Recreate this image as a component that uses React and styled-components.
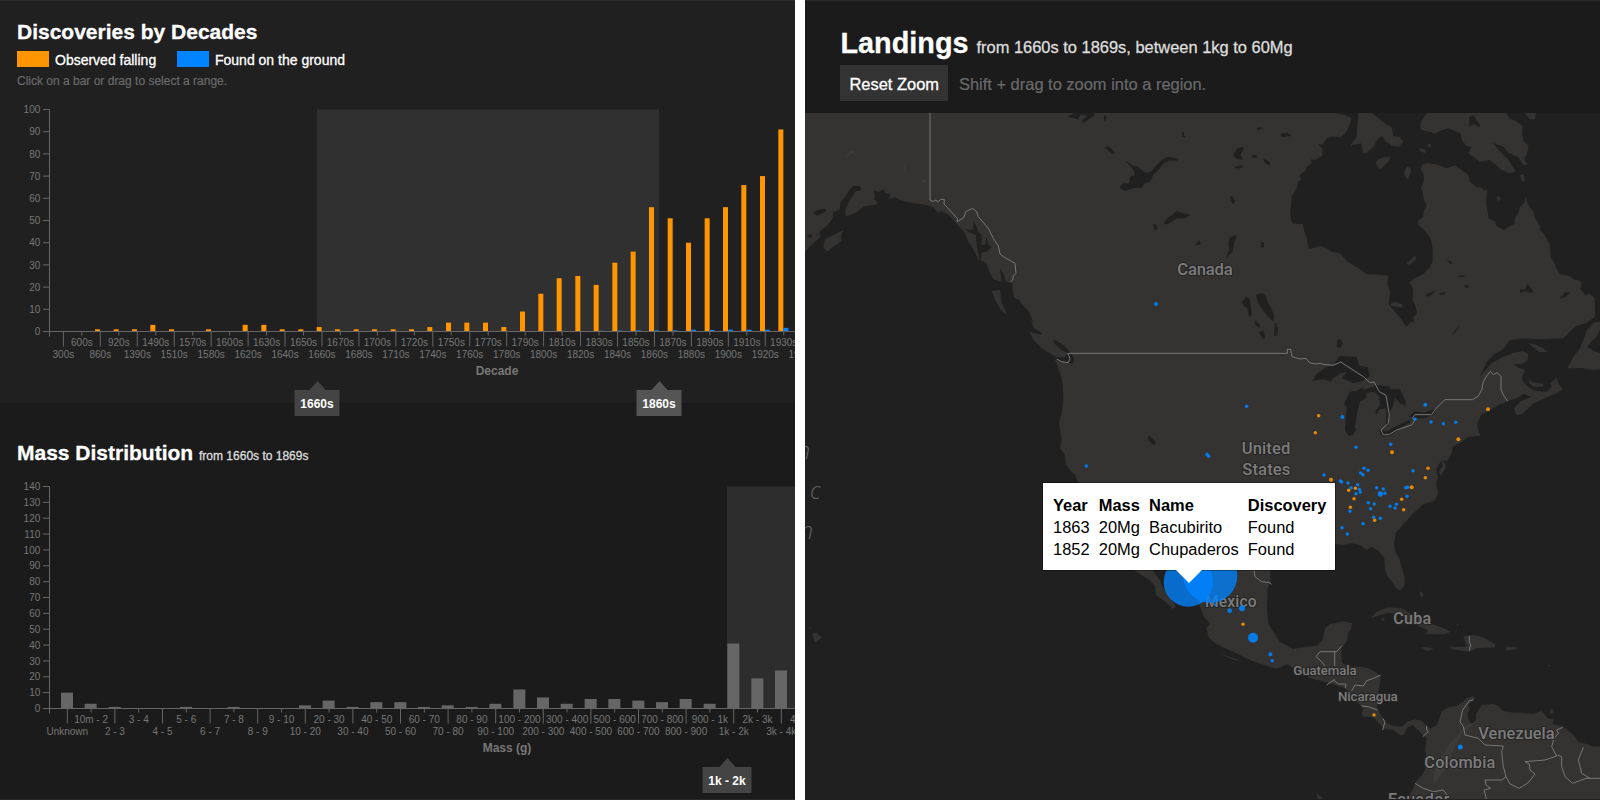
import React from "react";
import styled, { createGlobalStyle } from "styled-components";

const GlobalStyle = createGlobalStyle`
  body {
    margin: 0;
    background: #fff;
    overflow: hidden;
    font-family: "Liberation Sans", Arial, sans-serif;
  }
`;

const Page = styled.main`
  display: grid;
  grid-template-columns: 795px 795px;
  column-gap: 10px;
  width: 1600px;
  height: 800px;
`;

const Column = styled.div`
  display: flex;
  flex-direction: column;
  height: 800px;
  box-sizing: border-box;
  border-top: 1px solid #2c2c2c;
  border-bottom: 1px solid ${(p) => (p.$plain ? "#202020" : "#2a2a2a")};
  overflow: hidden;
`;

const ChartPanel = styled.section`
  position: relative;
  box-sizing: border-box;
  height: ${(p) => p.$height}px;
  padding-top: ${(p) => p.$top}px;
  background: ${(p) => p.$bg};
`;

const PanelHeading = styled.h2`
  margin: 0 0 0 17px;
  font-size: 21px;
  line-height: 24px;
  font-weight: bold;
  color: #fff;
  white-space: nowrap;
  -webkit-text-stroke: 0.3px;
`;

const HeadingNote = styled.small`
  font-size: 12px;
  font-weight: normal;
  color: #ddd;
`;

const Legend = styled.div`
  display: flex;
  height: 16px;
  margin: 7px 0 0 17px;
`;

const LegendItem = styled.span`
  display: flex;
  flex: none;
  align-items: center;
  gap: 6px;
  width: 160px;
  font-size: 14px;
  line-height: 20px;
  color: #fff;
  white-space: nowrap;
  -webkit-text-stroke: 0.3px;
  span {
    margin-top: 1px;
  }
  &::before {
    content: "";
    flex: none;
    width: 32px;
    height: 16px;
    background: ${(p) => p.$color};
  }
`;

const Hint = styled.p`
  margin: 7px 0 0 17px;
  font-size: 12px;
  line-height: 14px;
  color: #6a6a6a;
  -webkit-text-stroke: 0.2px;
`;

const ChartSvg = styled.svg`
  display: block;
  margin-top: ${(p) => p.$gap}px;
  font-size: 10px;
  fill: #777;
`;

const AxisTitle = styled.text`
  font-size: 12px;
  font-weight: bold;
  fill: #777;
`;

const BrushFlag = styled.div`
  position: absolute;
  z-index: 2;
  left: ${(p) => p.$x}px;
  top: ${(p) => p.$y}px;
  transform: translateX(-50%);
  box-sizing: border-box;
  width: ${(p) => p.$w}px;
  height: 26px;
  background: ${(p) => p.$tone};
  color: #fff;
  font-size: 12px;
  line-height: 28px;
  font-weight: bold;
  text-align: center;
  &::before {
    content: "";
    position: absolute;
    left: calc(50% - 8px);
    top: -9px;
    border: solid transparent;
    border-width: 0 8px 9px;
    border-bottom-color: ${(p) => p.$tone};
  }
`;

const MapHeader = styled.header`
  box-sizing: border-box;
  height: 112px;
  padding: 25px 0 0 35px;
  background: #1b1b1b;
`;

const MapHeading = styled.h1`
  margin: 0;
  padding-left: 0.5px;
  font-size: 28.8px;
  line-height: 34px;
  color: #fff;
  white-space: nowrap;
  -webkit-text-stroke: 0.3px;
  small {
    font-size: 16.45px;
    font-weight: normal;
    color: #ddd;
  }
`;

const MapActions = styled.div`
  display: flex;
  align-items: center;
  gap: 11.5px;
  margin-top: 1px;
  font-size: 16.45px;
  color: #6a6a6a;
`;

const ResetButton = styled.button`
  width: 107.5px;
  height: 36px;
  padding: 2px 0 0 1px;
  border: 0;
  background: #333;
  color: #fff;
  font: 16.45px "Liberation Sans", Arial, sans-serif;
  -webkit-text-stroke: 0.3px;
`;

const MapHint = styled.span`
  padding-top: 2px;
  -webkit-text-stroke: 0.2px;
`;

const MapCanvas = styled.div`
  position: relative;
  height: 686px;
  background: #202020;
`;

const MapSvg = styled.svg`
  display: block;
`;

const CountryName = styled.text`
  font-family: Roboto, sans-serif;
  font-weight: 500;
  font-size: ${(p) => p.$size}px;
  fill: #7c7c7c;
  stroke: #262524;
  stroke-width: 6px;
  stroke-linejoin: round;
  paint-order: stroke;
`;

const OceanName = styled.text`
  font-family: "Open Sans", sans-serif;
  font-size: 70px;
  font-weight: 300;
  font-style: italic;
  fill: #606060;
`;

const Tooltip = styled.div`
  position: absolute;
  left: 238px;
  top: 370px;
  box-sizing: border-box;
  width: 292px;
  height: 87px;
  padding: 11px 0 0 10px;
  background: #fff;
  color: #000;
  outline: 1px solid rgba(0, 0, 0, 0.35);
  &::after {
    content: "";
    position: absolute;
    left: 132px;
    top: 86px;
    border: solid transparent;
    border-width: 14px 14px 0;
    border-top-color: #fff;
  }
`;

const MeteoriteTable = styled.table`
  border-collapse: collapse;
  font-size: 16.45px;
  line-height: 22px;
  th,
  td {
    padding: 0 9.2px 0 0;
    text-align: left;
    white-space: nowrap;
  }
  th:last-child,
  td:last-child {
    padding-right: 0;
  }
`;

const DECADES = [
  ["300s", 0], ["600s", 0], ["860s", 1], ["920s", 1], ["1390s", 1], ["1490s", 3], ["1510s", 1],
  ["1570s", 0], ["1580s", 1], ["1600s", 0], ["1620s", 3], ["1630s", 3], ["1640s", 1], ["1650s", 1],
  ["1660s", 2], ["1670s", 1], ["1680s", 1], ["1700s", 1], ["1710s", 1], ["1720s", 1], ["1740s", 2],
  ["1750s", 4], ["1760s", 4], ["1770s", 4], ["1780s", 2], ["1790s", 9], ["1800s", 17], ["1810s", 24],
  ["1820s", 25], ["1830s", 21, 0.1], ["1840s", 31, 0.2], ["1850s", 36, 0.3], ["1860s", 56, 0.3],
  ["1870s", 51, 0.3], ["1880s", 40, 0.6], ["1890s", 51, 0.5], ["1900s", 56, 0.6], ["1910s", 66, 0.6],
  ["1920s", 70, 0.6], ["1930s", 91, 1.4], ["1940s", 0],
];

const MASSES = [
  ["Unknown", 10], ["10m - 2", 3], ["2 - 3", 1], ["3 - 4", 0], ["4 - 5", 0], ["5 - 6", 1], ["6 - 7", 0],
  ["7 - 8", 1], ["8 - 9", 0], ["9 - 10", 0], ["10 - 20", 2], ["20 - 30", 5], ["30 - 40", 1],
  ["40 - 50", 4], ["50 - 60", 4], ["60 - 70", 1], ["70 - 80", 2], ["80 - 90", 1], ["90 - 100", 3],
  ["100 - 200", 12], ["200 - 300", 7], ["300 - 400", 3], ["400 - 500", 6], ["500 - 600", 6],
  ["600 - 700", 5], ["700 - 800", 4], ["800 - 900", 6], ["900 - 1k", 3], ["1k - 2k", 41],
  ["2k - 3k", 19], ["3k - 4k", 24], ["4k - 5k", 0],
];

const PLOT_HEIGHT = 222;
const BASE = 230.5;

function BarChart({ data, max, first, step, barWidth, barColor, brush, brushFill, title, titleX, gap }) {
  const unit = PLOT_HEIGHT / max;
  const ticks = Array.from({ length: max / 10 + 1 }, (_, i) => i * 10);
  return (
    <ChartSvg $gap={gap} width="795" height="280">
      <rect x={brush[0]} y={BASE - PLOT_HEIGHT} width={brush[1] - brush[0]} height={PLOT_HEIGHT} fill={brushFill} />
      <path d={`M43.5 ${BASE - PLOT_HEIGHT}H49.5V${BASE + 5}`} fill="none" stroke="#666" />
      {ticks.map((t) => {
        const y = BASE - t * unit;
        return (
          <g key={t}>
            <path d={`M43 ${y}H49.5`} stroke="#666" />
            <text x="40.3" y={y + 3.6} textAnchor="end">{t}</text>
          </g>
        );
      })}
      {data.map(([label, value, found], i) => {
        const x = first + i * step;
        const low = i % 2 === 0;
        return (
          <g key={label}>
            {value > 0 && (
              <rect
                x={Math.round((x - (barWidth === 5 ? 5.3 : 6.3)) * 3) / 3}
                y={BASE - value * unit}
                width={barWidth}
                height={value * unit}
                fill={barColor}
              />
            )}
            {found && <rect x={x - 0.3} y={BASE - found * unit - 0.5} width="5" height={found * unit + 0.5} fill="#0084ff" />}
            <path d={`M${x} ${BASE}v${low ? 15 : 4}`} stroke="#666" />
            <text x={x} y={BASE + (low ? 26.6 : 14.6)} textAnchor="middle">{label}</text>
          </g>
        );
      })}
      <path d={`M49 ${BASE}H795`} stroke="#666" />
      <AxisTitle x={titleX} y={BASE + 43.5} textAnchor="middle">{title}</AxisTitle>
    </ChartSvg>
  );
}

/* Map geometry, in thirds of a pixel. */
const MAINLAND = `M15 339H1602L1632 344L1655 355L1648 375L1640 395L1625 410L1592 410L1580 415L1568 434L1555 432
L1568 448L1566 468L1545 480L1532 478L1535 490L1520 500L1518 510L1500 525L1503 540L1494 545L1492 560L1475 590L1471 640L1472 660L1480 671
L1508 672L1512 690L1520 715L1526 746L1538 745L1560 738L1580 745L1595 755L1618 760L1634 775L1645 787L1670 800L1700 823L1745 824L1766 828L1762 850
L1770 875L1766 912L1785 935L1805 960L1820 980L1832 965L1842 968L1840 952L1852 940L1845 915L1838 900L1840 870L1828 845
L1845 835L1870 822L1890 800L1898 785L1898 745L1892 715L1880 700L1866 685L1852 672L1856 660L1870 650L1872 630L1880 618L1872 600L1868 575L1863 565
L1872 540L1870 520L1862 508L1866 495L1880 489L1910 493L1940 505L1965 496L1985 510L2005 525L2010 545L2030 562L2045 562L2052 572L2062 568L2058 610
L2066 655L2085 665L2090 678L2112 691L2125 682L2142 672L2145 655L2155 640L2160 620L2170 612L2177 593L2185 615L2200 635L2205 655L2222 680L2218 688L2230 700L2240 716
L2250 735L2252 775L2262 785L2268 803L2280 822L2310 828L2322 838L2342 843L2345 860L2340 865L2355 885L2370 882L2384 895L2385 950L2360 968L2325 980L2290 1015
L2220 1018L2170 1015L2130 1020L2110 1048L2080 1065L2060 1085L2050 1110L2035 1132L2055 1112L2075 1090L2110 1070L2140 1058
L2170 1053L2185 1063L2182 1083L2165 1092L2142 1092L2152 1102L2172 1108L2175 1115L2165 1132L2172 1150L2190 1165L2205 1172L2240 1175L2255 1160
L2252 1150L2270 1132L2275 1150L2288 1167L2270 1180L2255 1185L2220 1202L2200 1210L2185 1225L2165 1243L2150 1246L2142 1225L2160 1205
L2194 1190L2170 1182L2150 1195L2125 1203L2100 1213L2070 1230L2045 1242L2032 1270L2034 1288L2042 1307L2005 1310L1985 1325L1958 1340
L1955 1360L1942 1383L1928 1380L1937 1395L1935 1408L1922 1428L1917 1415L1927 1398L1925 1380L1908 1408L1914 1430L1908 1452L1915 1480L1908 1495L1902 1503L1870 1513L1840 1540
L1810 1572L1788 1598L1782 1630L1786 1655L1800 1680L1804 1700L1814 1730L1813 1758L1800 1772L1788 1763L1775 1745L1760 1725L1755 1710
L1753 1675L1735 1652L1715 1640L1700 1650L1680 1635L1655 1630L1630 1635L1605 1632L1500 1640L1430 1680L1410 1715L1412 1745L1403 1765
L1401 1830L1405 1870L1420 1895L1440 1925L1465 1938L1478 1947L1520 1940L1550 1937L1567 1922L1572 1900L1575 1885L1590 1872
L1630 1864L1656 1870L1652 1890L1643 1900L1643 1918L1635 1932L1624 1945L1625 1985L1640 2000L1680 2000L1705 2005L1730 2018L1742 2028L1740 2050
L1735 2075L1740 2100L1730 2118L1742 2145L1755 2165L1780 2178L1805 2180L1822 2165L1845 2158L1865 2162L1878 2176L1890 2186L1910 2175
L1920 2150L1925 2135L1945 2122L1970 2118L1985 2108L2000 2095L2020 2088L2025 2097L2005 2115L2012 2140L2010 2165L2028 2168
L2025 2145L2040 2125L2045 2115L2080 2112L2095 2118L2110 2133L2140 2138L2170 2138L2200 2142L2225 2133L2235 2145L2245 2156L2262 2156L2258 2172
L2290 2180L2310 2195L2325 2210L2335 2225L2360 2232L2380 2240L2400 2240V2400H1815L1835 2375L1848 2345L1870 2320L1882 2290L1875 2250L1880 2215
L1858 2195L1838 2175L1820 2185L1812 2205L1800 2205L1780 2190L1755 2187L1735 2168L1720 2150L1690 2150L1685 2140L1690 2125
L1670 2105L1655 2090L1635 2065L1615 2058L1575 2045L1530 2035L1510 2015L1480 2005L1460 1992L1435 2005L1415 2003L1350 1980L1300 1955
L1265 1940L1240 1925L1225 1910L1220 1885L1230 1870L1212 1850L1200 1820L1185 1790L1150 1740L1120 1700L1060 1690V1715
L1080 1740L1090 1765L1110 1790L1128 1820L1117 1827L1112 1818L1095 1805L1068 1785L1065 1757L1045 1738L1005 1712
L970 1680L900 1640L860 1500L835 1448L825 1425L810 1410L797 1392L795 1365L780 1345L785 1320L777 1270L785 1240L790 1200
L788 1150L780 1120L772 1095L765 1080L800 1087L818 1092L822 1078L815 1062L805 1050L790 1035L760 1018L762 1030L785 1050L803 1060L795 1072
L770 1072L725 1045L700 1020L688 995L725 1005L725 998L702 985L692 958L700 968L688 937L668 915L658 900L642 893L637 865L638 850L618 845
L612 825L600 805L605 845L580 838L568 815L560 790L535 778L518 745L505 725L495 700L482 685L465 665L450 648L422 632L415 640L400 622
L380 615L330 608L300 600L285 592L265 598L272 582L255 580L250 568L238 575L220 572L225 585L222 598L232 605L228 615L215 615L190 620L165 640L138 650
L135 630L150 600L165 575L185 570L180 558L160 558L148 570L135 592L122 605L118 630L100 635L98 655L85 672L60 695L40 718L15 735Z`;

const ISLANDS = [
  "M15 735L60 700L62 710L40 730L15 755Z",
  "M75 718L110 700L130 690L122 712L125 722L100 740L82 755L70 740Z",
  "M575 872L600 870L604 905L622 945L605 932L585 900Z",
  "M1675 339H1715L1722 345L1745 362L1757 372L1775 382L1780 408L1800 412L1810 425L1797 440L1778 438L1758 425L1747 408L1735 415L1720 440L1700 458L1688 460L1684 430L1650 437L1670 412Z",
  "M1880 339H2118L2128 355L2150 365L2168 378L2166 405L2172 425L2186 437L2180 465L2172 475L2182 495L2170 495L2155 472L2140 465L2125 458L2110 440L2080 430L2105 460L2125 478L2147 515L2130 520L2105 510L2085 492L2068 480L2040 485L2005 460L2015 440L2000 438L1985 420L1982 400L1965 393L1945 385L1920 392L1905 402L1890 395L1862 390V365Z",
  "M1726 490L1735 478L1755 470L1772 472L1765 485L1748 502L1738 508Z",
  "M1812 515L1820 498L1832 505L1832 520L1822 538L1815 528Z",
  "M2172 339H2207L2205 358L2190 358Z",
  "M1855 450L1862 445L1878 450L1874 460Z M1878 435L1892 432V443Z",
  "M2160 525L2170 522L2175 545L2165 542Z",
  "M2090 592L2096 587L2103 597L2094 604Z",
  "M1820 790L1845 767L1848 778L1828 795Z M1770 912L1785 905L1807 913V923L1775 918Z",
  "M2400 965L2380 968L2360 992L2350 1020L2340 1045L2320 1070L2302 1105L2345 1104L2375 1110L2400 1108V1060L2385 1055L2362 1040L2375 1022L2390 1010L2400 990Z",
  "M2185 1030L2210 1035L2232 1046L2243 1057L2218 1056L2200 1042Z",
  "M2188 1135L2195 1146L2230 1152V1160L2200 1160L2188 1150Z",
  "M1713 1855L1730 1835L1765 1822L1805 1825L1840 1845L1875 1865L1925 1882L1952 1895L1935 1903H1875L1885 1892L1860 1880L1835 1868L1800 1845L1765 1838L1740 1845Z",
  "M1860 1942L1880 1940L1903 1948L1880 1953Z",
  "M1950 1940L2000 1940L1990 1908L2020 1905L2050 1912L2085 1932L2085 1942L2030 1945L2010 1955L1955 1948Z",
  "M2117 1942L2145 1940L2152 1947L2120 1952Z",
  "M2010 1949h6v4h-6Z M2245 1995h7v4h-7Z M1970 1873h6v4h-6Z",
  "M1860 1773L1870 1780L1868 1795L1860 1785Z M1745 1855h8v7h-8Z",
  "M38 1900L52 1898L65 1913L45 1928L40 1915Z M22 1881L36 1883L34 1887Z",
  "M2252 2128L2262 2130L2258 2142L2248 2140Z M1550 2380L1575 2400H1553Z",
  "M495 703L512 695L530 700L535 730L545 765L533 765L515 735Z",
  "M565 775L585 780L590 800L600 820L590 835L570 818Z",
];

const LAKES = [
  "M803 350L820 340L880 339L885 345L850 369L845 362L862 348L842 343L835 358Z",
  "M912 345L919 348L918 368L912 360Z",
  "M915 443L925 438L943 455V462L935 462Z",
  "M975 480L1000 497L1015 500L1035 518L1053 515L1065 500L1085 480L1105 470L1138 477L1130 482H1108L1092 490L1075 510L1060 525L1050 545L1035 548L1025 565L1005 563L975 573L958 562L970 550H987L990 530L1005 525L1000 510Z",
  "M1147 397L1152 396V405L1158 412H1145Z",
  "M1090 673L1100 655L1118 645L1128 633L1150 640L1172 645L1155 655H1130L1105 672Z",
  "M1058 672L1070 675L1073 685L1065 692Z",
  "M1185 735L1198 720L1202 728L1200 735Z",
  "M1302 460L1312 445L1330 440V450L1322 462L1328 480L1310 476L1300 467Z M1355 465h15v9h-12Z M1388 475L1410 485V497L1395 488Z",
  "M1370 385L1383 380L1387 386L1372 390Z M1440 402L1462 398L1475 408L1445 411Z",
  "M1305 500L1330 495L1325 505H1305Z",
  "M1290 588L1298 590L1306 602L1300 613L1292 603Z M1288 715L1305 705L1310 712L1302 730L1298 755L1278 774L1288 748L1285 735Z M1384 725L1392 728L1391 742L1382 742Z",
  "M1368 885L1385 878L1397 885L1402 905L1412 920L1422 945L1420 965L1400 945L1385 925L1375 910Z",
  "M1326 905L1340 890L1350 898L1355 945L1348 952L1342 925L1330 918Z M1362 960L1377 970L1382 985L1368 978Z M1425 965L1434 985L1432 1005L1422 1010Z M1377 995L1390 990L1396 1015L1388 1018Z",
  "M1612 1020L1620 1017L1628 1030L1622 1045L1610 1040Z",
  "M1875 885L1905 870L1900 880L1885 890Z M1918 880L1936 877L1934 884H1920Z M1975 828L1995 825L1992 831H1978Z M1940 778L1958 788L1950 792Z M1993 855h15l-4 8h-8Z",
  "M2160 868L2175 868L2182 852L2190 860L2202 878H2185L2178 873L2160 880Z",
  "M2080 430L2100 437L2110 452L2096 450Z M2280 895L2295 877L2312 875L2295 892Z",
  "M2008 350L2020 346L2040 375V382L2020 372L2008 380Z M1958 1000L1980 976L1972 990L1960 1003Z",
  "M1044 1305L1062 1320L1068 1330L1060 1335L1045 1320Z",
  "M2002 2140L2012 2130L2028 2140V2160L2015 2172L2005 2160Z",
  "M495 688L520 690L520 660L530 680L534 695L545 705L545 735L555 735L560 710L565 735L575 740L560 755L545 758L540 785L530 740L528 705L505 695Z",
  "M38 640L52 630L75 626L80 632L65 642L50 646Z M20 705L35 703L38 710L28 715Z",
];

/* Great Lakes block, drawn from its own origin. */
const GREAT_LAKES = [
  "M36 122L50 102L78 82L102 76L108 62L120 48L170 50L178 78L203 82L210 108L190 122L160 130L125 115L140 96L122 100L100 115L92 125L70 118Z",
  "M190 150L215 142L240 152L200 158L198 175L180 185L172 215L165 260L168 270L160 284L145 287L135 270L137 235L140 200L132 192L150 155L170 152L190 142Z",
  "M225 135L270 140L270 148L300 148L318 185L315 197L300 190L285 172L280 195L270 215V235L262 225L258 205L240 208L230 222L225 215L240 195L238 170L215 148Z",
  "M238 268L258 275L282 262L310 248L330 238V248L300 265L275 285L250 290L240 280Z",
  "M327 230L342 214L370 218L395 210L410 205L400 225L370 235H345Z",
  "M260 210L270 215L264 260L258 258Z",
];

const BORDERS = [
  "M390 339V600L400 605L405 600L415 605L422 598H433L432 612L472 655V665L492 652L497 635L518 625L530 635L535 650L565 685L580 715L595 738L600 762L610 770L645 790L648 820L640 828L638 840L632 845",
  "M770 1077L785 1085L805 1088L810 1075L803 1060H1462V1048H1472L1476 1070L1500 1077L1518 1075L1528 1088L1545 1092L1562 1090L1570 1093L1600 1096L1622 1086L1690 1130L1710 1148L1722 1146L1738 1175L1758 1186L1768 1245L1765 1270L1743 1290L1750 1305L1768 1303L1790 1290L1835 1275L1845 1260L1837 1253L1845 1244H1895L1908 1225L1935 1199H2018L2035 1188L2045 1170L2050 1145L2060 1128L2072 1114L2080 1124L2092 1118L2103 1130V1170L2112 1188L2123 1203",
  "M1362 1712L1365 1730L1385 1745L1408 1748L1415 1753",
  "M1625 1938L1610 1955H1560L1548 1970L1560 1980L1575 1997 M1604 1955V1998 M1604 2038L1580 2055 M1600 2040L1615 2052L1638 2052L1636 2065 M1655 2072L1665 2055L1690 2058L1700 2042L1720 2035L1742 2025",
  "M1685 2118L1705 2120L1732 2130 M1748 2155L1755 2165L1748 2190 M1880 2178V2190L1885 2195L1868 2210",
  "M2008 1908L2008 1925L2012 1935L2008 1952",
  "M2020 2100L2008 2102L1988 2130L1980 2165L1990 2180L1995 2205L2035 2215L2055 2235L2110 2238L2105 2255L2110 2300L2118 2330L2130 2352L2158 2365L2185 2348L2205 2322L2190 2310L2188 2292L2175 2285L2235 2280L2270 2268L2255 2240L2262 2215L2275 2200L2270 2190L2288 2182",
  "M2272 2265L2285 2270V2300L2295 2330L2318 2350L2358 2335H2400 M2350 2242L2335 2280L2345 2320L2370 2335",
  "M2118 2330L2105 2340L2055 2340L2058 2355L2072 2365L2052 2370L2060 2400 M1845 2350L1870 2365L1900 2375L1930 2370L1945 2390",
];

const RIDGES = [
  "M1900 2320L1930 2260L1950 2230L2000 2175L2045 2155L1990 2195L1965 2240L1935 2310L1900 2355Z",
  "M1255 1960L1330 1985L1300 1978Z",
  "M130 475L150 452L170 452L155 462Z M362 545L375 538V550Z M310 500L315 497V515Z",
];

const FOUND = [
  [140, 19], [427, 51, 6], [676, 14, 6], [645, 57], [693, 66], [730, 71], [767, 67], [21, 163], [26, 169],
  [468, 142], [572, 133], [372, 225], [639, 212], [492, 205], [504, 211], [482, 219], [489, 224],
  [421, 243], [425, 246], [444, 249], [473, 254], [453, 263], [468, 281], [478, 268], [481, 276],
  [530, 263], [550, 267], [541, 282, 8], [555, 280], [617, 263], [623, 262], [621, 289], [505, 308],
  [523, 312], [512, 326], [570, 319], [589, 313], [585, 324], [450, 334], [521, 352], [541, 355],
  [489, 371], [426, 383], [442, 402], [89, 632, 7], [126, 625, 9], [159, 713, 15], [211, 763, 6],
  [217, 782], [781, 1041, 7.5], [46, 614, 4], [-132, -288, 6], [-341, 198],
];

const FALLEN = [
  [356, 47], [346, 98], [864, 28, 6], [775, 118, 6], [576, 157, 6], [684, 205], [676, 233], [393, 239, 6],
  [466, 265], [446, 271], [462, 296], [451, 322], [635, 262, 6], [605, 298], [611, 329], [524, 361],
  [129, 673], [522, 945],
];

const COUNTRIES = [
  ["Canada", 1132, 825, 166, 50], ["United", 1325, 1363, 146, 50], ["States", 1327, 1425, 144, 50],
  ["Mexico", 1215, 1820, 155, 47], ["Cuba", 1780, 1871, 113, 48], ["Guatemala", 1480, 2025, 190, 40],
  ["Nicaragua", 1614, 2104, 179, 40], ["Venezuela", 2035, 2218, 229, 49], ["Colombia", 1873, 2305, 213, 49],
  ["Ecuador", 1764, 2414, 184, 48],
];

function LandingsMap() {
  return (
    <MapSvg width="795" height="686" viewBox="15 339 2385 2058">
      <g fill="#343332">
        <path d={MAINLAND} />
        {ISLANDS.map((d) => <path key={d} d={d} />)}
      </g>
      <g fill="#3c3b3a">{RIDGES.map((d) => <path key={d} d={d} />)}</g>
      <g fill="#202020">
        {LAKES.map((d) => <path key={d} d={d} />)}
        <g transform="translate(1500 1020)">{GREAT_LAKES.map((d) => <path key={d} d={d} />)}</g>
      </g>
      <g fill="none" stroke="#777" strokeWidth="3" strokeLinejoin="round">
        {BORDERS.map((d) => <path key={d} d={d} />)}
      </g>
      {COUNTRIES.map(([name, x, y, w, size]) => (
        <CountryName key={name} x={x} y={y} $size={size} textLength={w}>{name}</CountryName>
      ))}
      <OceanName x="-9" y="1377">n</OceanName>
      <OceanName x="30" y="1496">c</OceanName>
      <OceanName x="0" y="1616">n</OceanName>
      <g transform="translate(1200 1200)">
        <g fill="#0084ff" fillOpacity="0.88">
          {FOUND.map(([x, y, r = 5.2]) => <circle key={`${x},${y}`} cx={x} cy={y} r={r} />)}
        </g>
        <g fill="#ff9500" fillOpacity="0.88">
          {FALLEN.map(([x, y, r = 5.2]) => <circle key={`${x},${y}`} cx={x} cy={y} r={r} />)}
        </g>
      </g>
      <g fill="#0084ff" fillOpacity="0.77">
        <circle cx="1165" cy="1746" r="74" />
        <circle cx="1231" cy="1728" r="81" />
      </g>
    </MapSvg>
  );
}

const METEORITES = [
  ["1863", "20Mg", "Bacubirito", "Found"],
  ["1852", "20Mg", "Chupaderos", "Found"],
];

export default function App() {
  return (
    <Page>
      <GlobalStyle />
      <Column>
        <ChartPanel $height={402} $top={19} $bg="#202020">
          <PanelHeading>Discoveries by Decades</PanelHeading>
          <Legend>
            <LegendItem $color="#ff9500"><span>Observed falling</span></LegendItem>
            <LegendItem $color="#0084ff"><span>Found on the ground</span></LegendItem>
          </Legend>
          <Hint>Click on a bar or drag to select a range.</Hint>
          <BarChart
            data={DECADES}
            max={100}
            first={63.4}
            step={18.47}
            barWidth={5}
            barColor="#ff9500"
            brush={[317, 659]}
            brushFill="#303030"
            title="Decade"
            titleX={497}
            gap={13}
          />
          <BrushFlag $x={317} $y={389} $w={45} $tone="#444">1660s</BrushFlag>
          <BrushFlag $x={659} $y={389} $w={45} $tone="#555">1860s</BrushFlag>
        </ChartPanel>
        <ChartPanel $height={396} $top={38} $bg="#1b1b1b">
          <PanelHeading>
            Mass Distribution <HeadingNote>from 1660s to 1869s</HeadingNote>
          </PanelHeading>
          <BarChart
            data={MASSES}
            max={140}
            first={67.3}
            step={23.8}
            barWidth={12}
            barColor="#666"
            brush={[727, 795]}
            brushFill="#2d2d2d"
            title="Mass (g)"
            titleX={507}
            gap={10}
          />
          <BrushFlag $x={727} $y={364} $w={49} $tone="#444">1k - 2k</BrushFlag>
        </ChartPanel>
      </Column>
      <Column $plain>
        <MapHeader>
          <MapHeading>
            Landings <small>from 1660s to 1869s, between 1kg to 60Mg</small>
          </MapHeading>
          <MapActions>
            <ResetButton>Reset Zoom</ResetButton>
            <MapHint>Shift + drag to zoom into a region.</MapHint>
          </MapActions>
        </MapHeader>
        <MapCanvas>
          <LandingsMap />
          <Tooltip>
            <MeteoriteTable>
              <thead>
                <tr><th>Year</th><th>Mass</th><th>Name</th><th>Discovery</th></tr>
              </thead>
              <tbody>
                {METEORITES.map((row) => (
                  <tr key={row[2]}>{row.map((cell) => <td key={cell}>{cell}</td>)}</tr>
                ))}
              </tbody>
            </MeteoriteTable>
          </Tooltip>
        </MapCanvas>
      </Column>
    </Page>
  );
}
